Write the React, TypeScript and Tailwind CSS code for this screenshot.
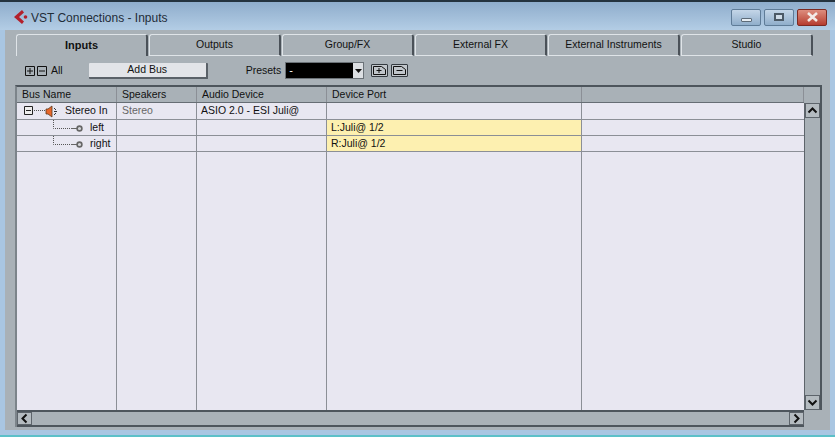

const font = { fontFamily: '"Liberation Sans", Arial, sans-serif' };

function Tab({ label, active, width }: { label: string; active?: boolean; width: string }) {
  return (
    <div
      className={`${width} h-[22px] flex items-center justify-center text-[10.5px] text-[#111] rounded-t-[3px] border-t border-l border-t-[#dfe4e8] border-l-[#dfe4e8] border-r-2 border-r-[#4a5158] bg-[#a9b1b7] ${
        active ? 'font-bold text-[11px]' : 'border-b border-b-[#dfe4e8]'
      }`}
    >
      {label}
    </div>
  );
}

function Cell({ className = '', children, muted }: { className?: string; children?: React.ReactNode; muted?: boolean }) {
  return (
    <div className={`h-full flex items-center px-[4px] border-r border-r-[#8b8f96] text-[10.5px] whitespace-nowrap overflow-hidden ${muted ? 'text-[#666]' : 'text-[#111]'} ${className}`}>
      {children}
    </div>
  );
}

function Row({ name, speakers, device, port, yellow, first }: { name: React.ReactNode; speakers?: string; device?: string; port?: string; yellow?: boolean; first?: boolean }) {
  return (
    <div className={`flex border-b border-b-[#8b8f96] shrink-0 ${first ? 'h-[17px]' : 'h-[16px]'}`}>
      <Cell className="w-[100px] !px-0 shrink-0">{name}</Cell>
      <Cell className="w-[80px] !pl-[5px] shrink-0" muted>{speakers}</Cell>
      <Cell className="w-[130px] shrink-0">{device}</Cell>
      <Cell className={`w-[255px] shrink-0 ${yellow ? 'bg-[#fdf0b0]' : ''}`}>{port}</Cell>
      <div className="flex-1" />
    </div>
  );
}

function Leaf({ label }: { label: string }) {
  return (
    <div className="flex items-center h-full w-full">
      <svg width="34" height="16" className="ml-[34px] shrink-0">
        <path d="M2.500 0V8.500H20" stroke="#555" strokeDasharray="1 1" fill="none" />
        <path d="M20 8.500H26" stroke="#666" />
        <circle cx="28.500" cy="8.500" r="2.400" fill="#d5d6da" stroke="#666" strokeWidth="1.600" />
      </svg>
      <span className="ml-[5px]">{label}</span>
    </div>
  );
}

function Chevron({ d }: { d: string }) {
  return (
    <svg width="13" height="13" viewBox="0 0 13 13">
      <path d={d} stroke="#111" strokeWidth="2" fill="none" />
    </svg>
  );
}

function ScrollButton({ d, className = '' }: { d: string; className?: string }) {
  return (
    <div className={`w-[15px] h-[15px] flex items-center justify-center shrink-0 bg-[#b4bbc0] border border-[#5d646b] ${className}`}>
      <Chevron d={d} />
    </div>
  );
}

export default function App() {
  return (
    <div style={font} className="w-[835px] h-[437px] overflow-hidden bg-[#a9c6e2] flex flex-col border-t-2 border-t-[#24333f] border-b-2 border-b-[#5cc0c8]">
      {/* Title bar */}
      <div className="h-[28px] shrink-0 flex items-center pl-[13px] pr-[8px] bg-gradient-to-b from-[#8fadcc] to-[#b3cde5]">
        <svg width="16" height="16" viewBox="0 0 16 16" className="shrink-0 mt-[2px]">
          <path d="M9 1L1 8l8 7 2-2.500L6 8l5-4.500z" fill="#b3202c" />
          <circle cx="12.500" cy="8" r="1.800" fill="#b3202c" />
        </svg>
        <span className="ml-[2px] text-[12px] text-[#1f2c38] mt-[3px]">VST Connections - Inputs</span>
        <div className="ml-auto flex gap-[3px] mt-[2px]">
          <div className="w-[30px] h-[17px] rounded-[2px] border border-[#5f7c98] bg-gradient-to-b from-[#c4d6e8] to-[#90aecb] flex items-center justify-center">
            <div className="w-[11px] h-[4px] mt-[5px] bg-[#e6edf3] border border-[#5d6b78] rounded-[1px]" />
          </div>
          <div className="w-[30px] h-[17px] rounded-[2px] border border-[#5f7c98] bg-gradient-to-b from-[#c4d6e8] to-[#90aecb] flex items-center justify-center">
            <div className="w-[10px] h-[8px] bg-[#cfdce8] border-2 border-[#4b5966]" />
          </div>
          <div className="w-[30px] h-[17px] rounded-[2px] border border-[#7d2a22] bg-gradient-to-b from-[#dd8d7e] to-[#b53b2f] flex items-center justify-center">
            <svg width="13" height="10" viewBox="0 0 13 10">
              <path d="M2 1l9 8M11 1L2 9" stroke="#f3ece8" strokeWidth="2.600" />
            </svg>
          </div>
        </div>
      </div>

      {/* Client */}
      <div className="mx-[5px] flex-1 min-h-0 flex flex-col bg-[#a9b1b7] mb-[5px] pl-[10px] pr-[8px] pb-[3px]">
        {/* Tabs */}
        <div className="flex items-end mt-[4px] h-[22px] shrink-0 gap-[1px] ml-[1px]">
          <Tab label="Inputs" active width="w-[132px]" />
          <Tab label="Outputs" width="w-[132px]" />
          <Tab label="Group/FX" width="w-[132px]" />
          <Tab label="External FX" width="w-[132px]" />
          <Tab label="External Instruments" width="w-[132px]" />
          <Tab label="Studio" width="w-[132px]" />
        </div>

        {/* Toolbar */}
        <div className="h-[29px] shrink-0 flex items-center text-[10.5px] text-[#111]">
          <div className="ml-[10px] flex items-center gap-[2px]">
            <svg width="10" height="10"><path d="M.5.5h9v9h-9zM5 2v6M2 5h6" stroke="#111" fill="none" /></svg>
            <svg width="10" height="10"><path d="M.5.5h9v9h-9zM2 5h6" stroke="#111" fill="none" /></svg>
          </div>
          <span className="ml-[4px]">All</span>
          <div className="ml-[26px] w-[119px] h-[16px] flex items-center justify-center bg-[#e2e4e8] border-r-2 border-b-2 border-r-[#5a6168] border-b-[#5a6168] rounded-[1px]">Add Bus</div>
          <span className="ml-[38px]">Presets</span>
          <div className="ml-[4px] w-[79px] h-[17px] flex bg-black border border-[#6b7278]">
            <span className="flex-1 text-white text-[11px] pl-[3px] leading-[14px]">-</span>
            <div className="w-[10px] bg-[#dcdfe3] flex items-center justify-center">
              <svg width="7" height="4"><path d="M0 0h7L3.500 4z" fill="#111" /></svg>
            </div>
          </div>
          <div className="ml-[7px] flex gap-[3px]">
            <div className="w-[17px] h-[13px] rounded-[1px] border border-[#33393f] bg-[#c0c5ca] flex items-center justify-center">
              <svg width="13" height="9"><path d="M.5.5h8l4 3v5h-12zM6 2v5M3.500 4.500h5" stroke="#111" fill="none" /></svg>
            </div>
            <div className="w-[17px] h-[13px] rounded-[1px] border border-[#33393f] bg-[#c0c5ca] flex items-center justify-center">
              <svg width="13" height="9"><path d="M.5.5h8l4 3v5h-12zM3.500 4.500h6" stroke="#111" fill="none" /></svg>
            </div>
          </div>
        </div>

        {/* Table panel */}
        <div className="flex-1 min-h-0 flex flex-col border-t-2 border-l-2 border-t-[#4d555c] border-l-[#7c848a]">
          <div className="flex flex-1 min-h-0 border-r-2 border-r-[#4d555c]">
            <div className="flex-1 flex flex-col min-w-0">
              {/* Header */}
              <div className="flex h-[16px] shrink-0 bg-[#a9b1b7] border-b border-b-[#666d74]">
                <Cell className="w-[100px] !px-[5px] pt-[1px] shrink-0">Bus Name</Cell>
                <Cell className="w-[80px] !px-[5px] pt-[1px] shrink-0">Speakers</Cell>
                <Cell className="w-[130px] !px-[5px] pt-[1px] shrink-0">Audio Device</Cell>
                <Cell className="w-[255px] !px-[5px] pt-[1px] shrink-0">Device Port</Cell>
                <div className="flex-1 border-r border-r-[#8b8f96]" />
              </div>
              {/* Body */}
              <div className="flex-1 min-h-0 flex flex-col bg-[#e8e7f1]">
                <Row
                  first
                  name={
                    <div className="flex items-center pl-[7px]">
                      <svg width="10" height="10" className="shrink-0"><path d="M.5.5h8v8h-8zM2 4.500h5" stroke="#222" fill="#eee" /></svg>
                      <svg width="12" height="4" className="shrink-0"><path d="M0 1.500h12" stroke="#555" strokeDasharray="1 1" /></svg>
                      <svg width="13" height="13" viewBox="0 0 13 13" className="shrink-0 -ml-[1px]">
                        <path d="M1 4h2l4-3v11L3 9H1z" fill="#e8672a" stroke="#5a3a20" strokeWidth=".8" />
                        <path d="M9 3l2 2M9 6.500h3M9 10l2-2" stroke="#333" fill="none" />
                      </svg>
                      <span className="ml-[7px]">Stereo In</span>
                    </div>
                  }
                  speakers="Stereo"
                  device="ASIO 2.0 - ESI Juli@"
                />
                <Row name={<Leaf label="left" />} yellow port="L:Juli@ 1/2" />
                <Row name={<Leaf label="right" />} yellow port="R:Juli@ 1/2" />
                <div className="flex flex-1 min-h-0">
                  <Cell className="w-[100px] shrink-0" />
                  <Cell className="w-[80px] shrink-0" />
                  <Cell className="w-[130px] shrink-0" />
                  <Cell className="w-[255px] shrink-0" />
                </div>
              </div>
            </div>
            {/* Vertical scrollbar */}
            <div className="w-[16px] shrink-0 flex flex-col bg-[#a9b1b7]">
              <div className="h-[16px] shrink-0" />
              <div className="flex-1 flex flex-col items-end justify-between bg-[#a9b1b7] border-l border-l-[#5d646b]">
                <ScrollButton d="M2.500 8.500l4-4 4 4" />
                <ScrollButton d="M2.500 4.500l4 4 4-4" />
              </div>
            </div>
          </div>
          {/* Horizontal scrollbar */}
          <div className="h-[17px] shrink-0 flex">
            <div className="flex-1 flex justify-between border-t-2 border-b-2 border-t-[#4d555c] border-b-[#4d555c] bg-[#a9b1b7]">
              <ScrollButton d="M8.500 2.500l-4 4 4 4" className="!h-[13px]" />
              <ScrollButton d="M4.500 2.500l4 4-4 4" className="!h-[13px]" />
            </div>
            <div className="w-[18px] shrink-0" />
          </div>
        </div>
      </div>
    </div>
  );
}
